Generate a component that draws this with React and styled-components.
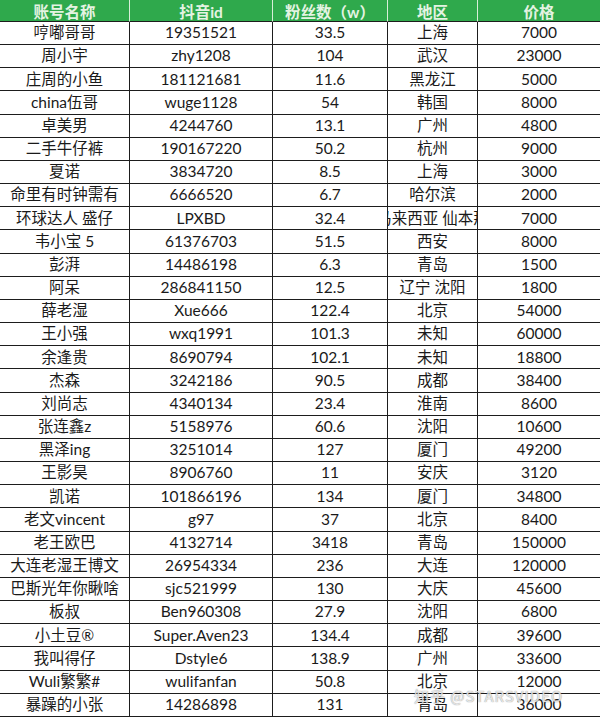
import React from "react";
import styled, { createGlobalStyle } from "styled-components";

const GlobalStyle = createGlobalStyle`
  html, body {
    margin: 0;
    padding: 0;
    background: #ffffff;
  }
  body {
    font-family: Lato, "Noto Sans CJK SC", sans-serif;
  }
`;

const Page = styled.div`
  position: relative;
  width: 600px;
  height: 717px;
  overflow: hidden;
  background: #ffffff;
`;

const Table = styled.div`
  display: grid;
  grid-template-columns: 130px 143px 115px 90px 1fr;
  grid-template-rows: 22px repeat(30, 1fr);
  height: 717px;
  width: 600px;
`;

const HeadCell = styled.div`
  display: flex;
  align-items: center;
  justify-content: center;
  background: #2fa94c;
  color: #e4f3e2;
  font-size: 15.5px;
  font-weight: 700;
  border-right: ${(p) => (p.$last ? "none" : "1px solid #d8eed8")};
  border-bottom: 1px solid #1d1d1d;
  white-space: nowrap;
`;

const Cell = styled.div`
  display: flex;
  align-items: center;
  justify-content: center;
  color: #1a1a1a;
  font-size: 15.5px;
  border-right: ${(p) => (p.$last ? "none" : "1px solid #1d1d1d")};
  border-bottom: 1px solid #1d1d1d;
  white-space: nowrap;
  overflow: hidden;
  line-height: 1;
`;

const Watermark = styled.div`
  position: absolute;
  left: 414px;
  top: 685px;
  font-family: "Noto Sans CJK SC", sans-serif;
  font-size: 15px;
  font-weight: 400;
  letter-spacing: 1px;
  color: rgba(255, 255, 255, 0.75);
  text-shadow: 0 0 1px rgba(120, 120, 120, 0.6), 0 0 1px rgba(120, 120, 120, 0.6);
  pointer-events: none;
`;

const headers = ["账号名称", "抖音id", "粉丝数（w）", "地区", "价格"];

const rows = [
  ["哼嘟哥哥", "19351521", "33.5", "上海", "7000"],
  ["周小宇", "zhy1208", "104", "武汉", "23000"],
  ["庄周的小鱼", "181121681", "11.6", "黑龙江", "5000"],
  ["china伍哥", "wuge1128", "54", "韩国", "8000"],
  ["卓美男", "4244760", "13.1", "广州", "4800"],
  ["二手牛仔裤", "190167220", "50.2", "杭州", "9000"],
  ["夏诺", "3834720", "8.5", "上海", "3000"],
  ["命里有时钟需有", "6666520", "6.7", "哈尔滨", "2000"],
  ["环球达人 盛仔", "LPXBD", "32.4", "马来西亚 仙本那", "7000"],
  ["韦小宝 5", "61376703", "51.5", "西安", "8000"],
  ["彭湃", "14486198", "6.3", "青岛", "1500"],
  ["阿呆", "286841150", "12.5", "辽宁 沈阳", "1800"],
  ["薛老湿", "Xue666", "122.4", "北京", "54000"],
  ["王小强", "wxq1991", "101.3", "未知", "60000"],
  ["余逢贵", "8690794", "102.1", "未知", "18800"],
  ["杰森", "3242186", "90.5", "成都", "38400"],
  ["刘尚志", "4340134", "23.4", "淮南", "8600"],
  ["张连鑫z", "5158976", "60.6", "沈阳", "10600"],
  ["黑泽ing", "3251014", "127", "厦门", "49200"],
  ["王影昊", "8906760", "11", "安庆", "3120"],
  ["凯诺", "101866196", "134", "厦门", "34800"],
  ["老文vincent", "g97", "37", "北京", "8400"],
  ["老王欧巴", "4132714", "3418", "青岛", "150000"],
  ["大连老湿王博文", "26954334", "236", "大连", "120000"],
  ["巴斯光年你瞅啥", "sjc521999", "130", "大庆", "45600"],
  ["板叔", "Ben960308", "27.9", "沈阳", "6800"],
  ["小土豆®", "Super.Aven23", "134.4", "成都", "39600"],
  ["我叫得仔", "Dstyle6", "138.9", "广州", "33600"],
  ["Wuli繁繁#", "wulifanfan", "50.8", "北京", "12000"],
  ["暴躁的小张", "14286898", "131", "青岛", "36000"],
];

export default function App() {
  return (
    <Page>
      <GlobalStyle />
      <Table>
        {headers.map((h, i) => (
          <HeadCell key={h} $last={i === headers.length - 1}>
            {h}
          </HeadCell>
        ))}
        {rows.map((row, r) =>
          row.map((v, c) => (
            <Cell key={r + "-" + c} $last={c === row.length - 1}>
              {v}
            </Cell>
          ))
        )}
      </Table>
      <Watermark>知乎 @STARSVIDEO</Watermark>
    </Page>
  );
}
